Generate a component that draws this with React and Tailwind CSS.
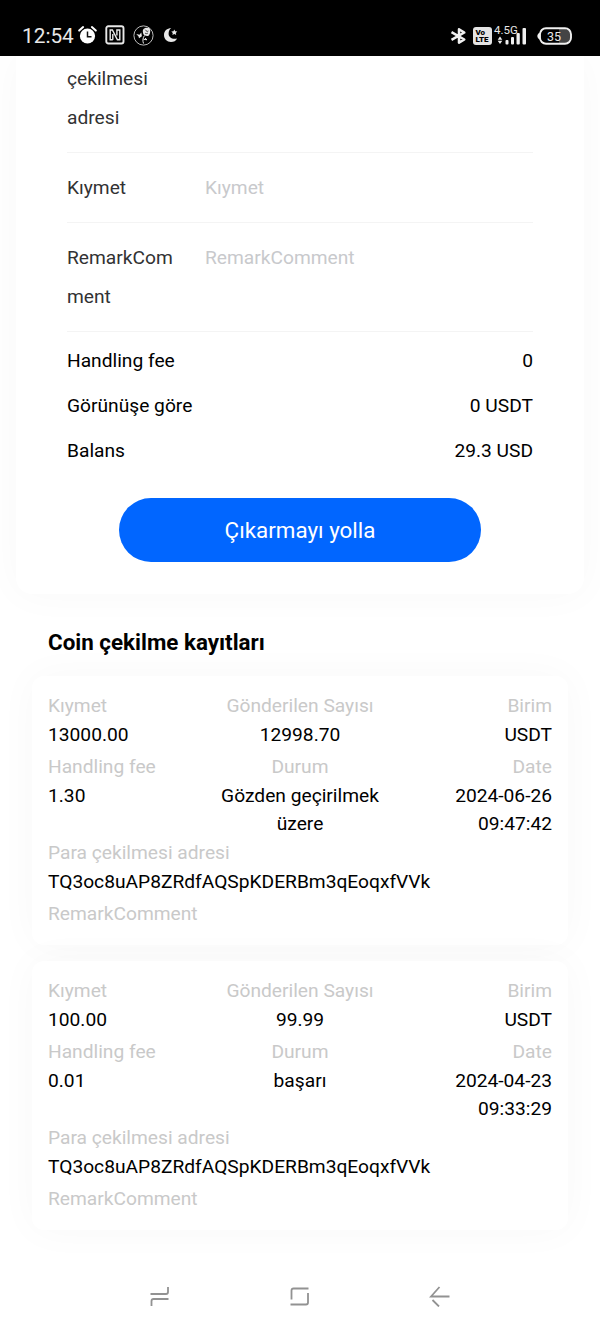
const fields = [
  { label: 'Kıymet', placeholder: 'Kıymet' },
  { label: 'RemarkComment', placeholder: 'RemarkComment' },
];

const totals = [
  { label: 'Handling fee', value: '0' },
  { label: 'Görünüşe göre', value: '0 USDT' },
  { label: 'Balans', value: '29.3 USD' },
];

const records = [
  {
    amount: '13000.00',
    sent: '12998.70',
    unit: 'USDT',
    fee: '1.30',
    status: 'Gözden geçirilmek üzere',
    date: '2024-06-26 09:47:42',
    address: 'TQ3oc8uAP8ZRdfAQSpKDERBm3qEoqxfVVk',
  },
  {
    amount: '100.00',
    sent: '99.99',
    unit: 'USDT',
    fee: '0.01',
    status: 'başarı',
    date: '2024-04-23 09:33:29',
    address: 'TQ3oc8uAP8ZRdfAQSpKDERBm3qEoqxfVVk',
  },
];

function StatusBar() {
  return (
    <header className="relative z-10 flex h-[56px] shrink-0 items-center justify-between bg-black pt-[15px] pr-[28px] pl-[22px] text-[#e8e8e8]">
      <div className="flex items-center">
        <span className="w-[56px] pt-[2px] text-[20.8px] leading-none whitespace-nowrap">12:54</span>

        {/* Alarm */}
        <svg className="h-[20px] w-[19px]" viewBox="0 0 19 20" fill="none">
          <circle cx="9.5" cy="11" r="7.6" fill="#fff" />
          <path d="M1.2 5.6 5.1 2.1M17.8 5.6l-3.9-3.500" stroke="#fff" strokeWidth="2" strokeLinecap="round" />
          <path d="M9.5 6.500v5.200h4" stroke="#111" strokeWidth="1.5" />
        </svg>

        {/* NFC */}
        <svg className="ml-[8px] h-[20px] w-[20px]" viewBox="0 0 20 20" fill="none" stroke="#e8e8e8">
          <rect x="1.3" y="1.3" width="17.2" height="17.2" rx="2" strokeWidth="1.9" />
          <path d="M7.800 14.700H5.200V5h2.200l5 9.700H14.800V5h-2.900v5.500M7.800 9v5.700" strokeWidth="1.4" />
        </svg>

        {/* Rose badge */}
        <svg className="ml-[8px] h-[21px] w-[21px]" viewBox="0 0 21 21" fill="none" stroke="#e8e8e8">
          <circle cx="10.5" cy="10.5" r="9.6" strokeWidth=".8" />
          <path d="M10.2 4.600c1.200-2.300 6-2.300 6.800-.3.700 1.500 0 5.700-1.500 6.500-1.900.7-5.200-.5-5.400-2.600-.1-1.300-.7-2.200.1-3.600Z" fill="#e8e8e8" stroke="none" />
          <path d="M12.300 4.700c1 1.800 2.100 2 3.100 1.300M12 8c1 .9 2.200.8 3-.2" stroke="#000" strokeWidth=".7" />
          <path d="M11.500 10.500c-1.800 2.500-2 5.200-1 8M10.500 14.300l3.500.5-2-1.700" strokeWidth="1" />
          <path d="m3.300 9 3.200.7L8.300 7.600l.6 3.700-2.900 2-.4-1.700Z" fill="#e8e8e8" stroke="none" />
        </svg>

        {/* Moon and star */}
        <svg className="ml-[9px] h-[18px] w-[16px]" viewBox="0 0 16 18">
          <path d="M8.2 2C4 2.2 1 5.1 1 9c0 4 3 7 7 7 2.8 0 5-1.4 6.1-3.6C9.500 13.700 5.500 11.500 5.600 7.500 5.700 4.900 6.600 3.200 8.200 2Z" fill="#e8e8e8" />
          <path d="m11.300 3.400.9 1.900 2.100.2-1.500 1.400.4 2.100-1.900-1.100L9.400 9l.4-2.100-1.500-1.400 2.100-.2Z" fill="#e8e8e8" />
        </svg>
      </div>

      <div className="flex items-center">
        {/* Bluetooth */}
        <svg className="h-[18px] w-[17px]" viewBox="0 0 17 18" fill="none" stroke="#f0f0f0" strokeWidth="2.500">
          <path d="M1.500 5.200 14.300 12.500 9 15.700V2.300l5.300 3.200L1.500 12.800" strokeLinejoin="round" />
        </svg>

        {/* VoLTE */}
        <div className="ml-[6px] flex h-[18px] w-[19px] flex-col justify-center rounded-[3px] bg-[#e4e4e4] pl-[2.5px] text-[8px] leading-[7px] font-black text-black">
          <span>Vo</span>
          <span>LTE</span>
        </div>

        {/* Mobile signal */}
        <div className="relative ml-[4px] h-[20px] w-[32px]">
          <span className="absolute -top-[1px] -left-[2px] text-[11.5px] leading-[11px]">4.5G</span>
          <svg className="h-[20px] w-[32px]" viewBox="0 0 32 20" fill="#f0f0f0">
            <path d="m4 10.500 2.300 3.300H1.700ZM4 18l2.300-3.200H1.700Z" />
            <rect x="9.500" y="14" width="3" height="4.500" rx="1" />
            <rect x="15" y="11" width="3" height="7.500" rx="1" />
            <rect x="20.500" y="7" width="3.300" height="11.500" rx="1" />
            <rect x="26.500" y="2" width="3.500" height="16.500" rx="1" />
          </svg>
        </div>

        {/* Battery */}
        <div className="relative ml-[9px] h-[18px] w-[35px]">
          <svg className="h-[18px] w-[35px]" viewBox="0 0 35 18" fill="none">
            <path d="M22 2h5c4 0 6.500 2.500 6.500 7s-2.500 7-6.500 7h-5Z" fill="#444" />
            <rect x="3" y="1.200" width="31" height="15.600" rx="6" stroke="#f0f0f0" strokeWidth="1.900" />
            <path d="M3 5.500C1.500 6 .3 7.500.3 9s1.200 3 2.700 3.500Z" fill="#f0f0f0" />
          </svg>
          <span className="absolute inset-0 pr-[1px] text-center text-[12.5px] leading-[19px]">35</span>
        </div>
      </div>
    </header>
  );
}

function FormRow({ label, placeholder }) {
  return (
    <div className="flex border-b border-[#f4f4f4] pt-[15.5px] pb-[15px] leading-[38.8px]">
      <div className="w-[108px] shrink-0 break-all text-[#323233]">{label}</div>
      <div className="ml-[30px] text-[#c8c9cc]">{placeholder}</div>
    </div>
  );
}

function Cell({ label, value, className }) {
  return (
    <div className={className}>
      <div className="text-[#c9c9c9]">{label}</div>
      <div className="min-h-[32.2px]">{value}</div>
    </div>
  );
}

function RecordCard({ record }) {
  return (
    <div className="h-[269px] rounded-[12px] bg-white px-[16px] pt-[16px] leading-[28.7px] shadow-[0_0_40px_rgba(0,0,0,0.03)]">
      <div className="grid grid-cols-3">
        <Cell label="Kıymet" value={record.amount} />
        <Cell label="Gönderilen Sayısı" value={record.sent} className="text-center" />
        <Cell label="Birim" value={record.unit} className="text-right" />
        <Cell label="Handling fee" value={record.fee} />
        <Cell label="Durum" value={record.status} className="text-center" />
        <Cell label="Date" value={record.date} className="text-right" />
      </div>
      <Cell label="Para çekilmesi adresi" value={record.address} />
      <div className="text-[#c9c9c9]">RemarkComment</div>
    </div>
  );
}

function NavBar() {
  return (
    <nav className="mt-auto flex h-[74px] items-center justify-between px-[149px] text-[#929292]">
      <svg className="h-[22px] w-[22px]" viewBox="0 0 22 22" fill="none" stroke="currentColor" strokeWidth="1.8">
        <path d="M1.5 9h15.500q2 0 2-2V2M19.500 14H4.500q-2 0-2 2v5" />
      </svg>
      <svg className="h-[22px] w-[22px]" viewBox="0 0 22 22" fill="none" stroke="currentColor" strokeWidth="1.8">
        <path d="M19.500 3.500H4.500q-2 0-2 2v9M1.500 19.500H17q2 0 2-2V8" />
      </svg>
      <svg className="h-[22px] w-[22px]" viewBox="0 0 22 22" fill="none" stroke="currentColor" strokeWidth="1.8">
        <path d="M20.500 11.500H2L10.500 2M3.500 15l6.500 6.500" />
      </svg>
    </nav>
  );
}

export default function App() {
  return (
    <div className="flex h-[1333px] w-[600px] flex-col overflow-hidden bg-white font-['Roboto',sans-serif] text-[19.2px] text-black">
      <StatusBar />

      <section className="mx-[16px] h-[538px] shrink-0 rounded-b-[16px] bg-white px-[51px] shadow-[0_0_40px_rgba(0,0,0,0.03)]">
        <div className="flex h-[97px] flex-col justify-end border-b border-[#f4f4f4] pb-[14.5px] leading-[38.8px] text-[#323233]">
          <span>çekilmesi</span>
          <span>adresi</span>
        </div>
        {fields.map((field) => (
          <FormRow key={field.label} {...field} />
        ))}
        <div className="pt-[7px]">
          {totals.map((item) => (
            <div key={item.label} className="flex h-[45px] items-center justify-between">
              <span>{item.label}</span>
              <span>{item.value}</span>
            </div>
          ))}
        </div>
        <button className="mx-auto mt-[24px] block h-[64px] w-[362px] rounded-full bg-[#0166ff] text-[22.4px] text-white">
          Çıkarmayı yolla
        </button>
      </section>

      <main className="px-[32px]">
        <h2 className="flex h-[82px] items-center px-[16px] pt-[16px] text-[22.4px] font-bold">Coin çekilme kayıtları</h2>
        <div className="flex flex-col gap-[16px]">
          {records.map((record) => (
            <RecordCard key={record.date} record={record} />
          ))}
        </div>
      </main>

      <NavBar />
    </div>
  );
}
